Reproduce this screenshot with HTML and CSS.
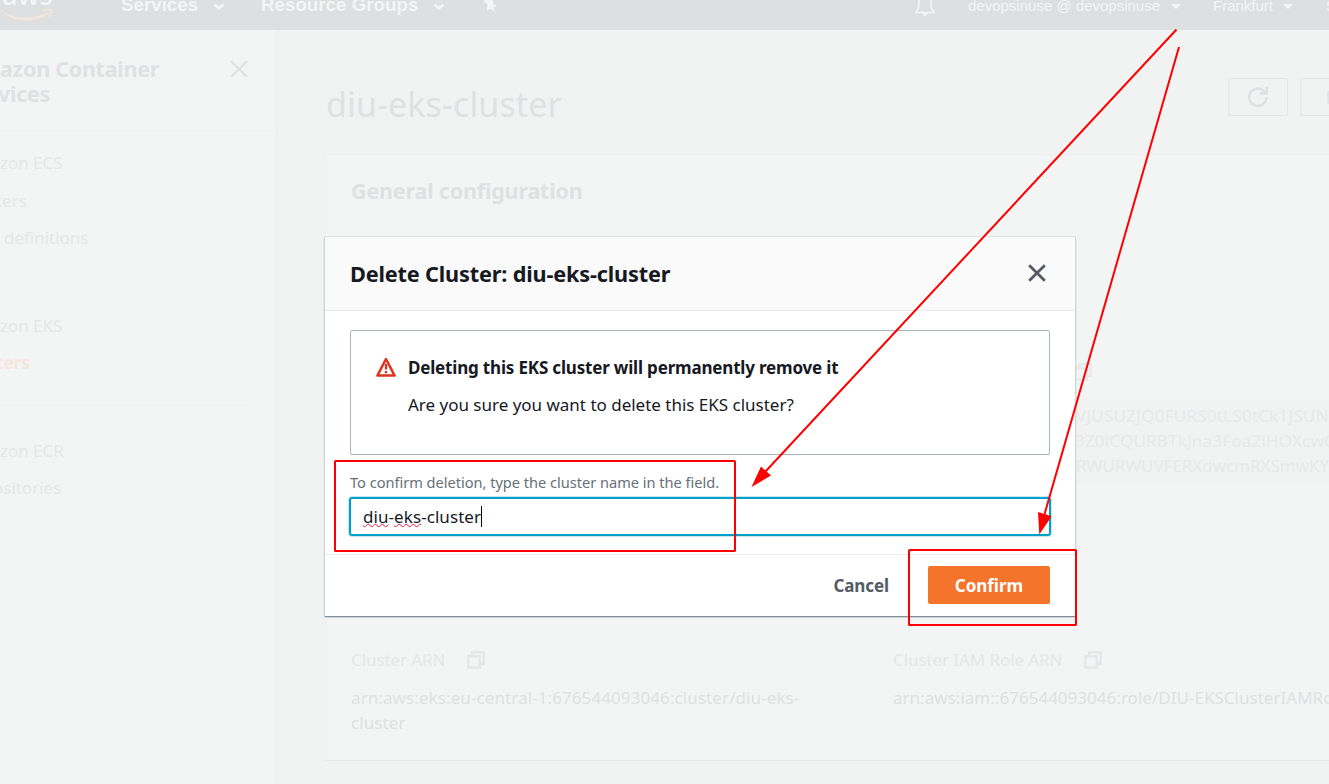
FILE: index.html
```html
<!DOCTYPE html>
<html lang="en">
<head>
<meta charset="utf-8">
<title>Delete Cluster</title>
<link rel="stylesheet" href="styles.css">
</head>
<body>
<svg class="defs" width="0" height="0">
  <symbol id="copy" viewBox="0 0 18 18"><path d="M5.200 5V1.300h11.500v11.500H13M1.300 5.200h11.500v11.500H1.300z" fill="none" stroke="currentColor" stroke-width="2.500" stroke-linejoin="round"/></symbol>
  <symbol id="close" viewBox="0 0 18 18"><path d="M1.200 1.200l15.600 15.600M16.800 1.200L1.200 16.800" fill="none" stroke="currentColor"/></symbol>
  <symbol id="caret" viewBox="0 0 12 8"><path d="M1.500 1.500L6 5.300l4.500-3.800" fill="none" stroke="currentColor" stroke-width="2.600"/></symbol>
</svg>
<div class="page">
  <header class="nav">
    <div class="brand">
      <span class="brand-text">aws</span>
      <svg class="smile" width="54" height="13" viewBox="0 0 54 13"><path d="M0 0C6 5 14 8.500 25 8.500C34 8.500 41 6.500 48 3.500L49 5C42 9 35 11.500 26 11.500C14 11.500 6 7.500 0 0z" fill="#f1e7dc"/><path d="M43 1.500q8-2 8.300-.5.5 3-2.500 7" fill="none" stroke="#f1e7dc" stroke-width="1.800"/></svg>
    </div>
    <span class="nav-item services">Services</span>
    <svg class="caret c1" width="12" height="8"><use href="#caret"/></svg>
    <span class="nav-item groups">Resource Groups</span>
    <svg class="caret c2" width="12" height="8"><use href="#caret"/></svg>
    <svg class="pin" width="16" height="14" viewBox="0 0 16 14"><path d="M2 0L.5 1.500l4 2.500-.5 7 3.500-2.500 5.500 4.500-3-5.500 4-1.500-4-2.500V0z" fill="#f4f5f5"/></svg>
    <svg class="bell" width="20" height="17" viewBox="0 0 20 17"><path d="M4 0v5q0 4-3 7.500h18Q16 9 16 5V0" fill="none" stroke="#f4f5f5" stroke-width="1.700"/><path d="M7 13h6q-1 3-3 3t-3-3z" fill="#f4f5f5"/></svg>
    <span class="nav-small account">devopsinuse @ devopsinuse</span>
    <i class="tri t1"></i>
    <span class="nav-small region">Frankfurt</span>
    <i class="tri t2"></i>
    <span class="nav-small support">Support</span>
  </header>
  <div class="body">
    <aside class="side">
      <div class="side-head">
        <h2 class="side-title"><span>azon Container</span><span class="clip-v">vices</span></h2>
        <svg class="side-close" width="18" height="18"><use href="#close"/></svg>
      </div>
      <div class="group g1"><p>zon ECS</p><p class="clip-t">ters</p><p class="defn">definitions</p></div>
      <div class="group g2"><p>zon EKS</p><p class="active clip-t">ters</p></div>
      <div class="group g3"><p>zon ECR</p><p class="clip-o">ositories</p></div>
    </aside>
    <main class="main">
      <div class="top">
        <h1>diu-eks-cluster</h1>
        <div class="actions">
          <div class="btn"><svg width="22" height="22" viewBox="0 0 22 22"><path d="M19.500 11a8.700 8.700 0 1 1-3-6.300L18.500 7" fill="none" stroke="currentColor" stroke-width="2.600"/><path d="M19.700 1v6.500h-7" fill="none" stroke="currentColor" stroke-width="2.400"/></svg></div>
          <div class="btn next">Delete</div>
        </div>
      </div>
      <section class="panel">
        <h3>General configuration</h3>
        <div class="cert">
          <svg class="cert-copy" width="18" height="18"><use href="#copy"/></svg>
          <div class="code"><p class="l1">VJUSUZJQ0FURS0tLS0tCk1JSUNR</p><p class="l2">3Z0lCQURBTkJna3Foa2lHOXcwQ</p><p class="l3">RWURWUVFERXdwcmRXSmwKYm</p></div>
        </div>
        <div class="arns">
          <div class="arn">
            <div class="label"><span class="k">Cluster ARN</span><svg width="18" height="18"><use href="#copy"/></svg></div>
            <p class="v v1">arn:aws:eks:eu-central-1:676544093046:cluster/diu-eks-<br>cluster</p>
          </div>
          <div class="arn second">
            <div class="label"><span class="k">Cluster IAM Role ARN</span><svg width="18" height="18"><use href="#copy"/></svg></div>
            <p class="v v2">arn:aws:iam::676544093046:role/DIU-EKSClusterIAMRole</p>
          </div>
        </div>
      </section>
    </main>
  </div>
</div>

<div class="modal">
  <div class="modal-head">
    <h2>Delete Cluster: diu-eks-cluster</h2>
    <svg class="modal-close" width="18" height="18"><use href="#close"/></svg>
  </div>
  <div class="modal-body">
    <div class="alert">
      <svg width="20" height="20" viewBox="0 0 20 20"><path d="M10 2L18.600 18.600H1.400z" fill="none" stroke="#dd3522" stroke-width="2.500" stroke-linejoin="round"/><path d="M10 7v5.500M10 14v2.300" stroke="#dd3522" stroke-width="2.300"/></svg>
      <div class="alert-text"><p class="strong">Deleting this EKS cluster will permanently remove it</p><p class="ask">Are you sure you want to delete this EKS cluster?</p></div>
    </div>
    <p class="hint">To confirm deletion, type the cluster name in the field.</p>
    <div class="field"><span class="typed"><span class="miss">diu</span>-<span class="miss">eks</span>-cluster</span><i class="cursor"></i></div>
  </div>
  <div class="modal-foot"><span class="cancel">Cancel</span><span class="confirm">Confirm</span></div>
</div>

<svg class="marks" width="1329" height="784" viewBox="0 0 1329 784">
  <g fill="none" stroke="#f00" stroke-width="2">
    <rect x="335" y="461" width="400" height="90" rx=".5"/>
    <rect x="909" y="550" width="167" height="75" rx=".5"/>
    <path d="M1176.500 29.500L765 472M1179 47L1044 516"/>
  </g>
  <path d="M751.500 487L761 466.500 771 475.500zM1039.300 534.500L1038 512l13.700 4.300z" fill="#f00"/>
</svg>
</body>
</html>
```
FILE: styles.css
```css
* { box-sizing: border-box; }
body { margin: 0; width: 1329px; height: 784px; overflow: hidden; position: relative; background: #f1f3f3; font: 17px/25px "Noto Sans", sans-serif; }
h1, h2, h3, p { margin: 0; }
svg { display: block; flex: none; }
.defs { position: absolute; }
.page { width: 1329px; height: 784px; overflow: hidden; display: flex; flex-direction: column; color: #dfe1e2; }

.nav { height: 30px; flex: none; display: flex; align-items: flex-start; background: #dedfe1; overflow: hidden; color: #f4f5f5; font-family: "Liberation Sans", Arial, sans-serif; white-space: nowrap; }
.brand { width: 121px; height: 30px; flex: none; }
.brand-text { display: block; margin: -20px 0 0 2px; font: 600 27px/30px "Open Sans", sans-serif; letter-spacing: -.1px; height: 29px; }
.nav-item { font-weight: 700; font-size: 18.75px; line-height: 22px; margin-top: -6px; flex: none; }
.services { width: 77px; }
.groups { width: 157px; }
.caret { margin-top: 3px; }
.c1 { margin-left: 15px; margin-right: 36px; }
.c2 { margin-left: 15px; }
.pin { margin-left: 38px; }
.bell { margin-left: 416px; }
.nav-small { font-size: 15px; line-height: 18px; margin-top: -3px; flex: none; }
.account { margin-left: 33px; width: 193px; }
.region { width: 61px; }
.tri { border: 5px solid transparent; border-top-color: #f4f5f5; border-bottom: 0; margin-top: 4px; flex: none; }
.t1 { margin-left: 10px; margin-right: 32px; }
.t2 { margin-left: 9px; margin-right: 33px; }

.body { flex: 1; display: flex; min-height: 0; }
.side { width: 277px; flex: none; border-right: 1px solid #edefef; background: #f3f5f4; overflow: hidden; color: #e5e7e8; padding-top: 2px; }
.side-head { height: 99px; padding: 24px 28px 0 0; display: flex; justify-content: space-between; border-bottom: 1px solid #f0f1f1; color: #dfe1e3; }
.side-title { font-size: 21.5px; line-height: 25px; letter-spacing: -.26px; white-space: nowrap; }
.side-title span { display: block; }
.clip-v { margin-left: -2px; }
.side-close { margin-top: 4px; stroke-width: 2.200; }
.group { margin-right: 26px; border-bottom: 1px solid #f0f1f1; letter-spacing: -.02px; }
.group p { height: 25px; white-space: nowrap; }
.group p + p { margin-top: 12.500px; }
.g1 { height: 150px; padding-top: 19px; }
.g2 { height: 125px; padding-top: 32px; }
.g3 { padding-top: 32px; border: 0; }
.group .defn { padding-left: 4px; }
.clip-t { margin-left: -4px; }
.clip-o { margin-left: -7px; }
.group .clip-o, .group .active { margin-top: 12px; }
.active { color: #f6e6e0; font-weight: 700; letter-spacing: 0; }

.main { flex: 1; min-width: 0; padding: 48px 0 0 48px; }
.top { height: 76px; display: flex; justify-content: space-between; }
h1 { font-size: 34px; line-height: 50px; font-weight: 400; letter-spacing: .1px; margin: 1px 0 0 1px; }
.actions { display: flex; gap: 12px; width: 101px; }
.btn { width: 60px; height: 38px; flex: none; border: 1px solid #e4e6e7; border-radius: 3px; display: flex; align-items: center; justify-content: center; }
.next { width: 100px; justify-content: flex-start; padding-left: 25px; font-weight: 700; }
.panel { width: 1100px; height: 607px; background: #f3f5f4; border: 1px solid #eff1f1; border-bottom: 1px solid #e7e9e9; }
h3 { height: 73px; padding: 23px 25px 0; border-bottom: 1px solid #f0f1f1; font-size: 21.5px; line-height: 25px; letter-spacing: -.18px; }
.cert { margin: 135px 0 0 747px; height: 121px; color: #e7e9ea; }
.code { margin-top: 16px; padding: 6px 0 6px 3px; height: 87px; background: #f1f3f2; white-space: nowrap; }
.l1 { letter-spacing: .25px; }
.l2 { margin-left: -1px; letter-spacing: .2px; }
.l3 { letter-spacing: -.03px; }
.cert-copy { margin-left: 1px; }
.arns { display: flex; margin-top: 158px; }
.arn { width: 542px; height: 95px; padding-left: 25px; border-right: 1px solid #f0f1f1; flex: none; }
.arn.second { border: 0; }
.label { display: flex; gap: 22px; padding-top: 5px; align-items: center; color: #e5e7e8; letter-spacing: -.08px; }
.v { margin-top: 13px; white-space: nowrap; color: #dfe1e2; }
.v1 { letter-spacing: .09px; }
.v2 { letter-spacing: .02px; }

.modal { position: absolute; left: 325px; top: 237px; width: 750px; height: 379px; background: #fff; color: #16191f; display: flex; flex-direction: column; box-shadow: 0 1px 1px #829195, 0 0 0 1px #dfe5e6, 1px 1px 1px #aab7b8, -1px 1px 1px #aab7b8; }
.modal-head { height: 74px; flex: none; display: flex; align-items: center; justify-content: space-between; padding: 0 29px 0 25px; background: #fafafa; border-bottom: 1px solid #e5ebeb; }
.modal-head h2 { font-size: 21.7px; line-height: 30px; letter-spacing: -.17px; }
.modal-close { color: #545b64; stroke-width: 2.800; margin-bottom: 1px; }
.modal-body { height: 243px; flex: none; padding: 19px 25px 0; }
.alert { height: 125px; border: 1px solid #aab7b8; border-radius: 2px; display: flex; gap: 12px; padding: 26px 25px; }
.alert-text { white-space: nowrap; margin-top: -2px; }
.strong { font-weight: 700; letter-spacing: -.18px; }
.ask { margin-top: 12px; letter-spacing: -.01px; }
.hint { margin-top: 15px; height: 27px; font-size: 14.6px; color: #687078; letter-spacing: -.02px; white-space: nowrap; }
.field { margin: 0 -1px; height: 39px; border: 2px solid #00a1c9; border-radius: 3px; box-shadow: 0 0 0 1px #c8e9f2; display: flex; align-items: center; padding: 0 0 1px 12px; }
.typed { letter-spacing: .07px; }
.miss { text-decoration: underline wavy #f0142f 1px; text-underline-offset: 0; text-decoration-skip-ink: none; }
.cursor { width: 1px; height: 21px; background: #000; }
.modal-foot { flex: 1; border-top: 1px solid #eaeded; padding: 0 25px 1px; display: flex; align-items: center; justify-content: flex-end; gap: 39px; font-weight: 700; }
.cancel { color: #545b64; letter-spacing: -.1px; padding-top: 1px; }
.confirm { width: 122px; height: 38px; line-height: 40px; text-align: center; background: #f5742b; color: #fff; border-radius: 2px; }
.marks { position: absolute; left: 0; top: 0; }
```
